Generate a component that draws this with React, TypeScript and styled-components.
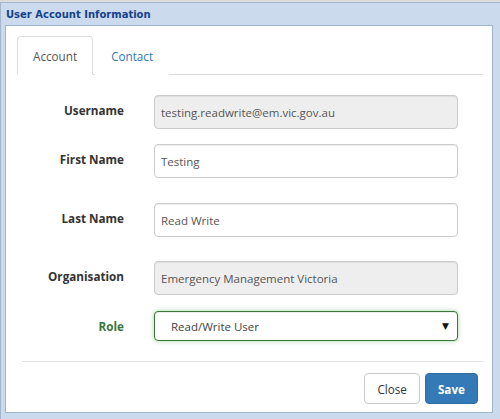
import React from "react";
import styled, { createGlobalStyle } from "styled-components";

const GlobalStyle = createGlobalStyle`
  html, body { margin: 0; padding: 0; }
  body { background: #dcdcdc; width: 500px; height: 419px; overflow: hidden; }
  * { box-sizing: border-box; }
`;

const Window = styled.div`
  margin-top: 2px;
  width: 500px;
  height: 417px;
  display: flex;
  flex-direction: column;
  background: #cbdaec;
  border-left: 1px solid #a3b6cd;
  border-top: 1px solid #a3b6cd;
  padding: 0 7px 6px 4px;
`;

const TitleBar = styled.div`
  height: 22px;
  display: flex;
  align-items: center;
  padding-left: 1px;
  font-family: "DejaVu Sans", Verdana, sans-serif;
  font-weight: bold;
  font-size: 10px;
  color: #15428b;
`;

const Body = styled.div`
  flex: 1;
  background: #fff;
  border: 1px solid #9fb4cd;
  padding: 10px 9px 0 11px;
  display: flex;
  flex-direction: column;
  font-family: "Open Sans", "Liberation Sans", sans-serif;
`;

const TabNav = styled.div`
  display: flex;
  height: 39px;
  border-bottom: 1px solid #ddd;
`;

const Tab = styled.div<{ $active?: boolean }>`
  height: 39px;
  padding: 0 15px;
  margin-right: 2px;
  display: flex;
  align-items: center;
  font-size: 11.7px;
  border: 1px solid ${(p) => (p.$active ? "#ddd" : "transparent")};
  border-bottom-color: ${(p) => (p.$active ? "#fff" : "transparent")};
  border-radius: 4px 4px 0 0;
  background: #fff;
  color: ${(p) => (p.$active ? "#555" : "#337ab7")};
  margin-bottom: -1px;
`;

const Form = styled.div`
  display: flex;
  flex-direction: column;
  padding-top: 20px;
`;

const Row = styled.div<{ $gap: number }>`
  display: grid;
  grid-template-columns: 107px 304px;
  column-gap: 30px;
  margin-bottom: ${(p) => p.$gap}px;
`;

const Label = styled.div<{ $success?: boolean }>`
  text-align: right;
  font-weight: bold;
  font-size: 11.7px;
  color: ${(p) => (p.$success ? "#3c763d" : "#333")};
  padding-top: 7px;
`;

const TextInput = styled.input`
  height: 34px;
  width: 304px;
  padding: 0 6px;
  font-family: "Open Sans", "Liberation Sans", sans-serif;
  font-size: 11.5px;
  color: #555;
  background: #fff;
  border: 1px solid #ccc;
  border-radius: 4px;
  box-shadow: inset 0 1px 1px rgba(0, 0, 0, 0.075);
  outline: none;
  &:disabled { background: #eee; color: #555; -webkit-text-fill-color: #555; opacity: 1; }
`;

const SelectBox = styled.div`
  height: 30px;
  width: 304px;
  padding: 0 8px 0 16px;
  display: flex;
  align-items: center;
  justify-content: space-between;
  font-size: 11.5px;
  color: #444;
  background: #fff;
  border: 1px solid #3c763d;
  border-radius: 4px;
  box-shadow: inset 0 1px 1px rgba(0, 0, 0, 0.075), 0 0 5px #a9d4a9;
`;

const Arrow = styled.span`
  font-size: 9px;
  color: #111;
  font-family: "DejaVu Sans", sans-serif;
`;

const Separator = styled.div`
  margin: 0 0 11px 5px;
  height: 1px;
  background: #e2e2e2;
`;

const Footer = styled.div`
  display: flex;
  justify-content: flex-end;
  gap: 5px;
  padding-right: 5px;
`;

const Button = styled.button<{ $primary?: boolean }>`
  height: 31px;
  padding: 0 12px;
  font-family: "Open Sans", "Liberation Sans", sans-serif;
  font-size: 11.7px;
  font-weight: ${(p) => (p.$primary ? "bold" : "normal")};
  color: ${(p) => (p.$primary ? "#fff" : "#333")};
  background: ${(p) => (p.$primary ? "#337ab7" : "#fff")};
  border: 1px solid ${(p) => (p.$primary ? "#2e6da4" : "#ccc")};
  border-radius: 4px;
`;

export default function App() {
  return (
    <>
      <GlobalStyle />
      <Window>
        <TitleBar>User Account Information</TitleBar>
        <Body>
          <TabNav>
            <Tab $active>Account</Tab>
            <Tab>Contact</Tab>
          </TabNav>
          <Form>
            <Row $gap={15}>
              <Label>Username</Label>
              <TextInput readOnly disabled value="testing.readwrite@em.vic.gov.au" />
            </Row>
            <Row $gap={25}>
              <Label>First Name</Label>
              <TextInput readOnly value="Testing" />
            </Row>
            <Row $gap={24}>
              <Label>Last Name</Label>
              <TextInput readOnly value="Read Write" />
            </Row>
            <Row $gap={16}>
              <Label>Organisation</Label>
              <TextInput readOnly disabled value="Emergency Management Victoria" />
            </Row>
            <Row $gap={20}>
              <Label $success>Role</Label>
              <SelectBox>
                <span>Read/Write User</span>
                <Arrow>▼</Arrow>
              </SelectBox>
            </Row>
          </Form>
          <Separator />
          <Footer>
            <Button>Close</Button>
            <Button $primary>Save</Button>
          </Footer>
        </Body>
      </Window>
    </>
  );
}
